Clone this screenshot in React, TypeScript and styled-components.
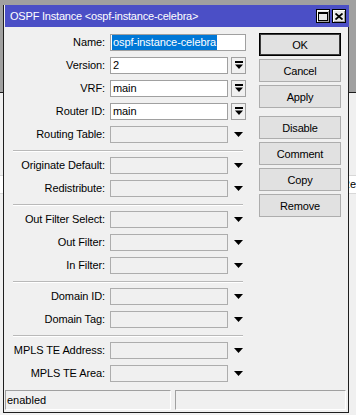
import React from "react";
import styled, { createGlobalStyle } from "styled-components";

const GlobalStyle = createGlobalStyle`
  html, body {
    margin: 0;
    padding: 0;
  }
  body {
    width: 356px;
    height: 415px;
    overflow: hidden;
    background: #a0a0a0;
    font-family: "Liberation Sans", Arial, sans-serif;
  }
`;

type Field = {
  label: string;
  value?: string;
  kind: "text" | "combo" | "empty";
  selected?: boolean;
};

const groups: Field[][] = [
  [
    { label: "Name:", value: "ospf-instance-celebra", kind: "text", selected: true },
    { label: "Version:", value: "2", kind: "combo" },
    { label: "VRF:", value: "main", kind: "combo" },
    { label: "Router ID:", value: "main", kind: "combo" },
    { label: "Routing Table:", kind: "empty" },
  ],
  [
    { label: "Originate Default:", kind: "empty" },
    { label: "Redistribute:", kind: "empty" },
  ],
  [
    { label: "Out Filter Select:", kind: "empty" },
    { label: "Out Filter:", kind: "empty" },
    { label: "In Filter:", kind: "empty" },
  ],
  [
    { label: "Domain ID:", kind: "empty" },
    { label: "Domain Tag:", kind: "empty" },
  ],
  [
    { label: "MPLS TE Address:", kind: "empty" },
    { label: "MPLS TE Area:", kind: "empty" },
  ],
];

const buttons = [
  { label: "OK", isDefault: true },
  { label: "Cancel" },
  { label: "Apply" },
  { label: "Disable", spaced: true },
  { label: "Comment" },
  { label: "Copy" },
  { label: "Remove" },
];

function ComboIcon() {
  return (
    <svg width="8" height="9" viewBox="0 0 8 9">
      <rect x="0" y="0" width="8" height="2" fill="#000" />
      <path d="M0 3.5h8L4 8z" fill="#000" />
    </svg>
  );
}

function ArrowIcon() {
  return (
    <svg width="9" height="5" viewBox="0 0 9 5">
      <path d="M0 0h9L4.5 5z" fill="#000" />
    </svg>
  );
}

function App() {
  return (
    <>
      <GlobalStyle />
      <Desktop>
        <BackWindow>
          <BackHeader>
            <BackCell />
            <BackCell>Re</BackCell>
          </BackHeader>
        </BackWindow>

        <Dialog>
          <TitleBar>
            <TitleText>OSPF Instance &lt;ospf-instance-celebra&gt;</TitleText>
            <TitleButtons>
              <TitleButton>
                <svg width="10" height="9" viewBox="0 0 10 9">
                  <rect x="0.5" y="0.5" width="9" height="8" fill="none" stroke="#000" />
                  <rect x="0" y="0" width="10" height="2" fill="#000" />
                </svg>
              </TitleButton>
              <TitleButton>
                <svg width="8" height="7" viewBox="0 0 8 7">
                  <path d="M0.5 0.5L7.5 6.5M7.5 0.5L0.5 6.5" stroke="#000" strokeWidth="1.8" />
                </svg>
              </TitleButton>
            </TitleButtons>
          </TitleBar>

          <Body>
            <Form>
              {groups.map((group, gi) => (
                <React.Fragment key={gi}>
                  {gi > 0 && <Separator />}
                  {group.map((f) => (
                    <Row key={f.label}>
                      <Label>{f.label}</Label>
                      {f.kind === "text" && (
                        <TextBox $wide>
                          {f.selected ? <Selection>{f.value}</Selection> : f.value}
                        </TextBox>
                      )}
                      {f.kind === "combo" && (
                        <>
                          <TextBox>{f.value}</TextBox>
                          <ComboButton>
                            <ComboIcon />
                          </ComboButton>
                        </>
                      )}
                      {f.kind === "empty" && (
                        <>
                          <TextBox $disabled />
                          <ArrowSlot>
                            <ArrowIcon />
                          </ArrowSlot>
                        </>
                      )}
                    </Row>
                  ))}
                </React.Fragment>
              ))}
            </Form>

            <ButtonColumn>
              {buttons.map((b) => (
                <Button key={b.label} $default={b.isDefault} $spaced={b.spaced}>
                  {b.label}
                </Button>
              ))}
            </ButtonColumn>
          </Body>

          <StatusBar>
            <StatusPanel $width={166}>enabled</StatusPanel>
            <StatusPanel />
          </StatusBar>
        </Dialog>
      </Desktop>
    </>
  );
}

export default App;

const Desktop = styled.div`
  position: relative;
  width: 356px;
  height: 415px;
  background: #a0a0a0;
  overflow: hidden;
`;

const BackWindow = styled.div`
  position: absolute;
  top: 92px;
  left: 0;
  right: 0;
  bottom: 0;
  background: #f0f0f0;
  border-top: 1px solid #1e1e1e;
`;

const BackHeader = styled.div`
  display: flex;
  margin-top: 82px;
  height: 17px;
  background: #fff;
  border-top: 1px solid #d8d8d8;
  border-bottom: 1px solid #d8d8d8;
  font-size: 11px;
  line-height: 17px;
  color: #000;
`;

const BackCell = styled.div`
  &:first-child {
    width: 349px;
    border-right: 1px solid #d8d8d8;
  }
  padding-left: 1px;
  white-space: nowrap;
`;

const Dialog = styled.div`
  position: absolute;
  left: 3px;
  top: 5px;
  width: 346px;
  height: 408px;
  box-sizing: border-box;
  display: flex;
  flex-direction: column;
  background: #f0f0f0;
  border: 1px solid #1e1e1e;
  border-top: none;
`;

const TitleBar = styled.div`
  height: 22px;
  display: flex;
  align-items: center;
  justify-content: space-between;
  background: #4b4fc6;
  margin: 0 -1px 0 1px;
  padding: 0 3px 0 5px;
`;

const TitleText = styled.div`
  color: #fff;
  font-size: 11px;
  letter-spacing: -0.2px;
  white-space: nowrap;
`;

const TitleButtons = styled.div`
  display: flex;
  gap: 2px;
`;

const TitleButton = styled.div`
  width: 14px;
  height: 14px;
  box-sizing: border-box;
  display: flex;
  align-items: center;
  justify-content: center;
  background: #e8e8e8;
  border: 1px solid #000;
  box-shadow: inset 1px 1px #fff, inset -1px -1px #a0a0a0;
`;

const Body = styled.div`
  display: flex;
  gap: 16px;
  padding: 0 0 0 9px;
`;

const Form = styled.div`
  display: flex;
  flex-direction: column;
  width: 230px;
  padding-top: 7px;
`;

const Row = styled.div`
  display: grid;
  grid-template-columns: 94px 118px 15px;
  column-gap: 3px;
  height: 17px;
  margin-bottom: 6px;
  font-size: 11px;
`;

const Label = styled.div`
  margin-right: -3px;
  padding-right: 5px;
  text-align: right;
  line-height: 17px;
  color: #000;
  letter-spacing: -0.1px;
  white-space: nowrap;
`;

const TextBox = styled.div<{ $wide?: boolean; $disabled?: boolean }>`
  grid-column: ${(p) => (p.$wide ? "2 / 4" : "auto")};
  box-sizing: border-box;
  height: 17px;
  border: 1px solid ${(p) => (p.$disabled ? "#adadad" : "#a0a0a0")};
  background: ${(p) => (p.$disabled ? "#f0f0f0" : "#fff")};
  padding: 0 2px;
  line-height: 15px;
  color: #000;
  letter-spacing: -0.1px;
  white-space: nowrap;
  overflow: hidden;
`;

const Selection = styled.span`
  display: inline-block;
  background: #0078d7;
  color: #fff;
  margin-left: -1px;
  padding: 0 1px;
`;

const ComboButton = styled.div`
  box-sizing: border-box;
  height: 17px;
  border: 1px solid #a0a0a0;
  background: #f0f0f0;
  display: flex;
  align-items: center;
  justify-content: center;
`;

const ArrowSlot = styled.div`
  display: flex;
  align-items: center;
  justify-content: center;
`;

const Separator = styled.div`
  height: 0;
  border-top: 1px solid #b9b9b9;
  border-bottom: 1px solid #fff;
  margin: 1px 0 5px;
`;

const ButtonColumn = styled.div`
  display: flex;
  flex-direction: column;
  gap: 3px;
  padding-top: 6px;
  width: 82px;
`;

const Button = styled.div<{ $default?: boolean; $spaced?: boolean }>`
  box-sizing: border-box;
  height: 23px;
  display: flex;
  align-items: center;
  justify-content: center;
  background: #e1e1e1;
  border: 1px solid ${(p) => (p.$default ? "#000" : "#adadad")};
  box-shadow: ${(p) => (p.$default ? "inset 0 0 0 1px #3c3c3c" : "none")};
  margin-top: ${(p) => (p.$spaced ? "5px" : "0")};
  font-size: 11px;
  letter-spacing: -0.2px;
  color: #000;
`;

const StatusBar = styled.div`
  margin-top: auto;
  display: flex;
  gap: 4px;
  height: 20px;
  padding: 0 2px 2px 1px;
`;

const StatusPanel = styled.div<{ $width?: number }>`
  box-sizing: border-box;
  ${(p) => (p.$width ? `width: ${p.$width}px;` : "flex: 1;")}
  border: 1px solid;
  border-color: #a0a0a0 #fff #fff #a0a0a0;
  padding-left: 1px;
  font-size: 11px;
  line-height: 18px;
  color: #000;
`;
